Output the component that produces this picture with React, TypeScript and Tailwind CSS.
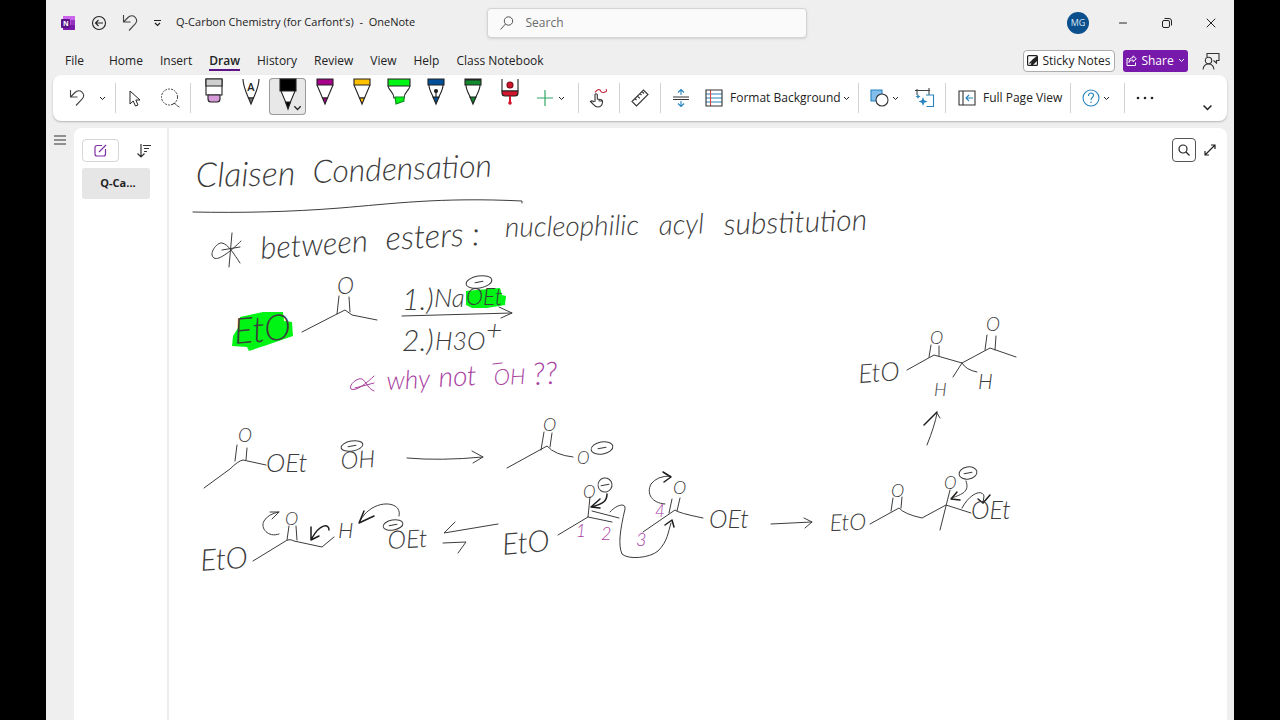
import type { ReactNode } from "react";
import { Minus, X } from "lucide-react";

const INK = "#3c3c3c";
const PLUM = "#a8409f";

interface Word {
  text: string;
  x: number;
  y: number;
  size: number;
  tilt?: number;
  color?: string;
}

const words: Word[] = [
  { text: "Claisen", x: 196, y: 187, size: 34, tilt: -1 },
  { text: "Condensation", x: 313, y: 183, size: 32, tilt: -2 },
  { text: "between", x: 261, y: 259, size: 31, tilt: -4 },
  { text: "esters :", x: 386, y: 250, size: 33, tilt: -3 },
  { text: "nucleophilic", x: 505, y: 237, size: 28, tilt: -1 },
  { text: "acyl", x: 659, y: 235, size: 28, tilt: -2 },
  { text: "substitution", x: 724, y: 235, size: 30, tilt: -2 },
  { text: "EtO", x: 235, y: 344, size: 36, tilt: -5 },
  { text: "O", x: 337, y: 294, size: 23 },
  { text: "1.)", x: 402, y: 310, size: 30 },
  { text: "Na", x: 434, y: 307, size: 26 },
  { text: "OEt", x: 466, y: 305, size: 23 },
  { text: "2.)", x: 402, y: 351, size: 30 },
  { text: "H3O", x: 435, y: 350, size: 25 },
  { text: "+", x: 486, y: 340, size: 28 },
  { text: "why", x: 387, y: 390, size: 26, tilt: -3, color: PLUM },
  { text: "not", x: 439, y: 387, size: 28, tilt: -3, color: PLUM },
  { text: "OH", x: 494, y: 385, size: 22, tilt: -2, color: PLUM },
  { text: "??", x: 533, y: 385, size: 31, tilt: -3, color: PLUM },
  { text: "O", x: 238, y: 442, size: 19 },
  { text: "OEt", x: 266, y: 472, size: 26 },
  { text: "OH", x: 341, y: 469, size: 24, tilt: -3 },
  { text: "O", x: 543, y: 431, size: 18 },
  { text: "O", x: 577, y: 464, size: 17 },
  { text: "EtO", x: 201, y: 571, size: 30, tilt: -4 },
  { text: "O", x: 285, y: 525, size: 18 },
  { text: "H", x: 338, y: 538, size: 22 },
  { text: "OEt", x: 388, y: 549, size: 25, tilt: -3 },
  { text: "EtO", x: 503, y: 555, size: 30, tilt: -5 },
  { text: "O", x: 583, y: 498, size: 17 },
  { text: "1", x: 576, y: 537, size: 17, color: PLUM },
  { text: "2", x: 601, y: 540, size: 18, color: PLUM },
  { text: "3", x: 636, y: 546, size: 18, color: PLUM },
  { text: "4", x: 655, y: 517, size: 17, color: PLUM },
  { text: "O", x: 673, y: 494, size: 18 },
  { text: "OEt", x: 709, y: 528, size: 25 },
  { text: "EtO", x: 830, y: 531, size: 23, tilt: -2 },
  { text: "O", x: 891, y: 497, size: 18 },
  { text: "O", x: 944, y: 489, size: 17 },
  { text: "OEt", x: 971, y: 519, size: 25 },
  { text: "EtO", x: 859, y: 383, size: 26, tilt: -4 },
  { text: "O", x: 930, y: 344, size: 18 },
  { text: "O", x: 986, y: 331, size: 19 },
  { text: "H", x: 934, y: 396, size: 18 },
  { text: "H", x: 978, y: 389, size: 21 },
];

const strokes = [
  // heading rule and bullet
  "M193 212C240 213 290 212 340 208S440 197 522 201v2",
  "M232 233L229 267M241 241C232 250 219 261 214 258C208 254 217 242 222 243C228 244 234 254 240 263M222 250L240 247",
  // ester with reagents
  "M302 332L335 315L345 310L352 315L377 320M339 296L337 314M349 297L350 312",
  "M402 316L512 313M499 307L512 313L501 318",
  // hydrolysis row
  "M204 488L230 469Q238 461 243 460L266 465M237 445L235 461M247 448L246 460",
  "M407 458Q440 461 483 457M472 451L483 457L473 463",
  "M507 468L547 446Q555 455 573 457M544 432L541 450M552 433L550 447",
  // deprotonation
  "M253 561L284 542Q289 538 294 541L322 547L334 537M289 526L287 540M296 526L297 540",
  "M279 534C268 538 260 528 264 521Q268 514 279 512M270 512L279 512L272 519",
  "M498 524L444 533L455 522M443 543L466 542L458 553",
  // enolate
  "M558 535L588 517L590 497M592 511L619 518M588 517L612 522",
  "M610 512C616 505 626 502 625 509C620 530 618 545 622 554C628 560 650 558 658 551C668 541 668 532 671 523",
  "M643 532L675 510Q678 513 703 518M672 499L669 513M680 498L677 511",
  "M665 504C652 503 646 494 651 484Q657 476 670 476",
  "M771 524L812 522M804 518L812 522L805 528",
  // tetrahedral intermediate
  "M870 524L899 508Q904 514 922 518L946 505L971 513M950 490L946 506L940 530M893 498L891 511M902 497L901 508",
  "M966 481C970 492 962 494 952 498M962 508C970 493 982 489 984 496L983 503",
  // beta-keto ester
  "M907 370L934 355L962 363L990 348L1016 357M931 345L929 357M939 346L939 356M987 335L985 350M996 336L995 350",
  "M962 363L953 377M962 363Q966 370 977 372",
  "M927 445Q935 425 937 413L940 418",
];

const boldStrokes = [
  "M329 530C329 523 320 524 312 538M311 527L311 540L319 536",
  "M364 511L359 523L374 516",
  "M607 494C607 503 600 504 592 507M600 499L591 507L600 508",
  "M665 525L672 520L674 527",
  "M663 472L671 477L664 482",
  "M957 492L951 499L960 500",
  "M978 499L983 503L990 495",
  "M924 425L937 412",
];

const charges = [
  { x: 479, y: 282, rx: 13, ry: 6 },
  { x: 352, y: 446, rx: 11, ry: 5 },
  { x: 602, y: 448, rx: 11, ry: 6 },
  { x: 393, y: 525, rx: 10, ry: 5 },
  { x: 605, y: 485, rx: 7, ry: 7 },
  { x: 968, y: 473, rx: 9, ry: 6 },
];

function InkLayer() {
  return (
    <svg
      className="block h-[592px] w-[1058px] shrink-0"
      viewBox="169 128 1058 592"
      fill="none"
      strokeLinecap="round"
      strokeLinejoin="round"
    >
      <g fill="#00f514">
        <path d="M240 317L263 312L283 312L284 321L292 322L293 336L267 345L249 351L247 347L232 346L233 336L238 328Z" />
        <path d="M466 291L500 288L502 295L506 296L505 305L487 308L472 308L466 305Z" />
      </g>
      <g stroke={INK} strokeWidth="1">
        {strokes.map((d) => (
          <path key={d} d={d} />
        ))}
        <path d="M399 516C403 500 372 498 360 521" />
        {charges.map((c) => (
          <g key={c.x} transform={`rotate(-10 ${c.x} ${c.y})`}>
            <ellipse cx={c.x} cy={c.y} rx={c.rx} ry={c.ry} />
            <path d={`M${c.x - 4} ${c.y}h8`} />
          </g>
        ))}
      </g>
      <g stroke="#1c1c1c" strokeWidth="1.5">
        {boldStrokes.map((d) => (
          <path key={d} d={d} />
        ))}
      </g>
      <path
        d="M374 376C368 382 356 392 351 389C348 385 358 377 362 379C366 381 368 389 374 391M355 388L374 383M493 364L502 363"
        stroke={PLUM}
      />
      <g className="font-['Lato',sans-serif] font-light italic">
        {words.map((w) => (
          <text
            key={`${w.text}-${w.x}`}
            x={w.x}
            y={w.y}
            fontSize={w.size}
            fill={w.color ?? INK}
            transform={`rotate(${w.tilt ?? 0} ${w.x} ${w.y})`}
          >
            {w.text}
          </text>
        ))}
      </g>
    </svg>
  );
}

function Caret({ className = "w-[7px]" }: { className?: string }) {
  return (
    <svg className={`shrink-0 ${className}`} viewBox="0 0 7 5" fill="none" stroke="currentColor" strokeWidth="1">
      <path d="M1 1l2.5 2.5L6 1" />
    </svg>
  );
}

function UndoIcon() {
  return (
    <svg width="16" height="18" viewBox="0 0 16 18" fill="none" stroke="#444" strokeWidth="1.1">
      <path d="M1.5 1v7h7M1.5 8L6 3.5c2-2 5-2.200 7-.4c2 2 2 4.800.2 6.900L7 16.500" />
    </svg>
  );
}

function Divider() {
  return <div className="mx-1 h-[30px] w-px shrink-0 bg-[#d2d2d2]" />;
}

interface ToolProps {
  label: string;
  className?: string;
  children: ReactNode;
}

function Tool({ label, className = "w-8", children }: ToolProps) {
  return (
    <button type="button" aria-label={label} className={`flex h-full shrink-0 items-center justify-center ${className}`}>
      {children}
    </button>
  );
}

function PenTool({ label, selected, children }: { label: string; selected?: boolean; children: ReactNode }) {
  return (
    <button
      type="button"
      aria-label={label}
      aria-pressed={!!selected}
      className={`relative mt-[3px] flex h-[37px] w-[37px] shrink-0 justify-center self-start rounded ${
        selected ? "bg-[#e8e8e8] ring-1 ring-[#9a9a9a] ring-inset" : ""
      }`}
    >
      <svg width="24" height="32" viewBox="0 0 24 32" fill="none" stroke="#222" strokeWidth="1.1" className="overflow-visible">
        {children}
      </svg>
      {selected && <Caret className="absolute right-1 bottom-1 w-[9px]" />}
    </button>
  );
}

function Pencil({ color }: { color: string }) {
  return (
    <>
      <path d="M4 7L9.500 20h5L20 7" fill="#fff" />
      <path d="M4 1h16v6H4z" fill={color} />
      <path d="M9.500 20h5L12 26z" fill={color} />
    </>
  );
}

const tabs = ["Home", "Insert", "Draw", "History", "Review", "View", "Help", "Class Notebook"];

function TitleBar() {
  return (
    <header className="flex h-[45px] items-center">
      <div className="flex min-w-0 flex-1 items-center pl-[14px]">
        <svg width="16" height="16" viewBox="0 0 16 16" className="shrink-0">
          <rect x="3" y="1" width="12" height="14" rx="1" fill="#ae4bd5" />
          <path d="M3 2a1 1 0 011-1h10a1 1 0 011 1v3H3z" fill="#ca64ea" />
          <path d="M11 5h4v5h-4z" fill="#9332bf" />
          <path d="M3 10h12v4a1 1 0 01-1 1H4a1 1 0 01-1-1z" fill="#7719aa" />
          <rect x="1" y="4" width="9" height="9" rx="1" fill="#5c1387" />
          <text x="3" y="11" fontSize="7" fontWeight="700" fill="#fff">N</text>
        </svg>
        <button type="button" aria-label="Back" className="ml-[15px]">
          <svg width="16" height="16" viewBox="0 0 16 16" fill="none" stroke="#222" strokeWidth="1.1">
            <circle cx="8" cy="8" r="6.500" />
            <path d="M12 8H4.500M7.500 5l-3 3l3 3" />
          </svg>
        </button>
        <button type="button" aria-label="Undo" className="ml-[15px]">
          <UndoIcon />
        </button>
        <button type="button" aria-label="Customize Quick Access Toolbar" className="ml-4">
          <svg width="7" height="8" viewBox="0 0 7 8" fill="none" stroke="#222" strokeWidth="1.200">
            <path d="M0 1.500h7M1 4l2.500 2.500L6 4" />
          </svg>
        </button>
        <h1 className="ml-[15px] truncate text-[11px] whitespace-pre">Q-Carbon Chemistry (for Carfont's)  -  OneNote</h1>
      </div>
      <label className="ml-[14px] flex h-[30px] w-80 items-center gap-3 rounded border border-[#d4d4d4] bg-[#fafafa] px-3 shadow-sm">
        <svg width="14" height="14" viewBox="0 0 14 14" fill="none" stroke="#555" strokeWidth="1">
          <circle cx="8.500" cy="5" r="4.200" />
          <path d="M5.500 8L.5 13.500" />
        </svg>
        <input
          type="text"
          aria-label="Search"
          placeholder="Search"
          className="min-w-0 flex-1 bg-transparent text-xs outline-none placeholder:text-[#6b6b6b]"
        />
      </label>
      <div className="flex flex-1 items-center justify-end pr-[15px]">
        <button type="button" className="size-[22px] rounded-full bg-[#0b4f8c] text-[9px] text-[#d7e6f4]">MG</button>
        <button type="button" aria-label="Minimize" className="ml-7">
          <Minus size={12} strokeWidth={2} />
        </button>
        <button type="button" aria-label="Restore" className="ml-8">
          <svg width="12" height="12" viewBox="0 0 12 12" fill="none" stroke="#222" strokeWidth="1">
            <rect x="1.500" y="3.500" width="7" height="7" rx="1.500" />
            <path d="M3.500 1.500H8A2.500 2.500 0 0110.500 4v4.500" />
          </svg>
        </button>
        <button type="button" aria-label="Close" className="ml-[30px]">
          <X size={16} strokeWidth={1.5} />
        </button>
      </div>
    </header>
  );
}

function TabRow() {
  return (
    <nav className="flex h-[30px] items-center pt-px pr-[14px] pl-[19px] text-xs">
      <a href="#file" className="mr-[25px]">File</a>
      <div className="flex gap-[17px]">
        {tabs.map((tab) => (
          <a
            key={tab}
            href={`#${tab}`}
            className={tab === "Draw" ? "relative font-semibold after:absolute after:inset-x-0 after:-bottom-[2px] after:h-[2px] after:bg-[#5c1387]" : ""}
          >
            {tab}
          </a>
        ))}
      </div>
      <button type="button" className="ml-auto flex h-[22px] w-[92px] shrink-0 items-center justify-center gap-1 rounded border border-[#adadad] bg-white whitespace-nowrap">
        <svg width="11" height="11" viewBox="0 0 11 11" fill="none" stroke="#222" strokeWidth="1.200" className="shrink-0">
          <rect x=".6" y=".6" width="9.800" height="9.800" rx="1" />
          <path d="M10 1v5L6 10H4c0-4 2-6 6-9z" fill="#222" stroke="none" />
          <path d="M2.500 8.500L7 4" />
        </svg>
        Sticky Notes
      </button>
      <button type="button" className="ml-2 flex h-[22px] w-[65px] items-center justify-center gap-1 rounded-[3px] bg-[#7719aa] text-white">
        <svg width="11" height="11" viewBox="0 0 11 11" fill="none" stroke="currentColor" strokeWidth="1">
          <path d="M3 3.500H1v7h8.500V7.500M7 .8l3.300 3L7 6.800V5C5 5 4 5.500 3 7.500C3 4.500 4.500 2.800 7 2.600z" />
        </svg>
        Share
        <Caret />
      </button>
      <button type="button" aria-label="Feedback" className="ml-[14px]">
        <svg width="18" height="18" viewBox="0 0 18 18" fill="none" stroke="#333" strokeWidth="1.100">
          <path d="M5 5V1.500h12v7h-2.500V11L11.500 8.500" />
          <circle cx="6.500" cy="8.500" r="3.200" />
          <path d="M1 17.500c.5-3.500 2.500-5.500 5.500-5.500s5 2 5.500 5.500" />
        </svg>
      </button>
    </nav>
  );
}

function Ribbon() {
  return (
    <div className="mx-[7px] flex h-[46px] items-center rounded-lg bg-white pl-2 text-xs shadow-[0_1px_2px_rgba(0,0,0,0.25)]">
      <Tool label="Undo">
        <UndoIcon />
      </Tool>
      <Tool label="Undo options" className="w-[18px]">
        <Caret />
      </Tool>
      <Divider />
      <Tool label="Select objects" className="w-[30px]">
        <svg width="12" height="17" viewBox="0 0 12 17" fill="none" stroke="#222" strokeWidth="1">
          <path d="M1 1v13l3.200-3l2.300 5L9 15L6.800 10H11z" />
        </svg>
      </Tool>
      <Tool label="Lasso select" className="ml-1 w-8">
        <svg width="20" height="20" viewBox="0 0 20 20" fill="none" stroke="#444" strokeWidth="1">
          <circle cx="9.500" cy="9" r="8" strokeDasharray="2 1" />
          <path d="M12 17c1-2 3-2 4-.5s2.500 2 3.500 2.500" />
        </svg>
      </Tool>
      <Divider />
      <PenTool label="Eraser">
        <path d="M4 1h16v16H4z" fill="#fff" />
        <path d="M4 1h16v7H4z" fill="#cfcfcf" />
        <path d="M6 17h12v4q0 3-3 3H9q-3 0-3-3z" fill="#d79ad8" />
      </PenTool>
      <PenTool label="Ink to text pen">
        <path d="M4 1C4 8 7 14 9.500 20h5C17 14 20 8 20 1" fill="#fff" />
        <path d="M9.500 20h5L12 26z" fill="#777" />
        <text x="12" y="13" textAnchor="middle" fontSize="11" fontWeight="600" fill="#222" stroke="none">A</text>
      </PenTool>
      <PenTool label="Black pen" selected>
        <path d="M5 13L10 25h4l5-12" fill="#fff" />
        <path d="M4 1h16v12H4z" fill="#000" />
        <path d="M9.500 24h5L12 31z" fill="#000" />
      </PenTool>
      <PenTool label="Purple pen"><Pencil color="#a6008a" /></PenTool>
      <PenTool label="Yellow pen"><Pencil color="#ffc000" /></PenTool>
      <PenTool label="Green highlighter">
        <path d="M1 8c1 5 6 6 6 12h10c0-6 5-7 6-12" fill="#fff" />
        <path d="M1 1h22v7H1z" fill="#00f514" />
        <path d="M8 19h9v4l-8 3z" fill="#00f514" stroke="#118a1b" />
      </PenTool>
      <PenTool label="Blue fountain pen">
        <path d="M5 7C5 12 8 16 9.500 20h5C16 16 19 12 19 7" fill="#fff" />
        <path d="M4 1h16v6H4z" fill="#004f98" />
        <path d="M9 19h6l-3 7z" fill="#004f98" />
        <path d="M12 14v6" />
        <circle cx="12" cy="13" r="1.500" fill="#222" />
      </PenTool>
      <PenTool label="Green pen">
        <path d="M5 7C5 12 8 16 9.500 20h5C16 16 19 12 19 7" fill="#fff" />
        <path d="M4 1h16v6H4zM4 2h16" fill="#12892f" />
        <path d="M9 19h6l-3 7z" fill="#12892f" />
      </PenTool>
      <PenTool label="Laser pointer">
        <path d="M4 1v12h16V1" fill="#fff" />
        <path d="M4 13h16v2q0 3-3 3H7q-3 0-3-3z" fill="#d0152c" />
        <circle cx="12" cy="7" r="3" fill="#d0152c" stroke="#7a0c1a" />
        <path d="M12 18v7" stroke="#d0152c" strokeWidth="2" />
        <circle cx="12" cy="25" r="1.800" fill="#d0152c" stroke="none" />
      </PenTool>
      <Tool label="Add pen" className="w-[46px] gap-[5px]">
        <svg width="16" height="16" viewBox="0 0 16 16" stroke="#2fa866" strokeWidth="1.200">
          <path d="M8 0v16M0 8h16" />
        </svg>
        <Caret />
      </Tool>
      <Divider />
      <Tool label="Draw with touch">
        <svg width="20" height="20" viewBox="0 0 20 20" fill="none" strokeWidth="1.100">
          <path d="M6 14V6.500q1.200-1.500 2.300 0V11l4.200.8q1.500.5 1 2.700c-.5 3-1.500 4.500-4.500 4.500c-3.500 0-4-2-7.500-5.500q1.500-1.500 3.500.5M10.200 11.500v2M12 12v2" stroke="#333" />
          <path d="M6 4.500c2-3 4-3.500 5-2.500s1 3 3.500 2.500s4-1.500 2.500-3.500" stroke="#c8283a" />
        </svg>
      </Tool>
      <Divider />
      <Tool label="Ruler">
        <svg width="18" height="18" viewBox="0 0 18 18" fill="none" stroke="#333" strokeWidth="1.100">
          <path d="M1 12.500L12.500 1L17 5.500L5.500 17zM4 9.500l1.500 1.500M6.500 7l2.300 2.300M9 4.500L10.500 6M11 2.500l2 2" />
        </svg>
      </Tool>
      <Divider />
      <Tool label="Insert space">
        <svg width="16" height="18" viewBox="0 0 16 18" fill="none" strokeWidth="1.100">
          <path d="M0 8h16M0 10.500h16" stroke="#333" />
          <path d="M8 6V.8M5 3.500l3-3l3 3M8 12v5.200M5 14.500l3 3l3-3" stroke="#2683bf" />
        </svg>
      </Tool>
      <button type="button" className="flex h-full w-[157px] shrink-0 items-center pl-2 whitespace-nowrap">
        <svg width="18" height="18" viewBox="0 0 18 18" fill="none" strokeWidth="1.100">
          <path d="M1 5h16M1 9h16M1 13h16" stroke="#2683bf" />
          <path d="M5.500 1v16" stroke="#d6473f" />
          <path d="M1 1h16v16H1z" stroke="#333" />
        </svg>
        <span className="mr-[2px] ml-[7px]">Format Background</span>
        <Caret />
      </button>
      <Divider />
      <Tool label="Shapes" className="w-[42px] gap-[3px]">
        <svg width="19" height="18" viewBox="0 0 19 18" strokeWidth="1.100">
          <path d="M1 1h11v11H1z" fill="#83bdec" stroke="#2683bf" />
          <circle cx="12" cy="11" r="6" fill="#fff" stroke="#333" />
        </svg>
        <Caret />
      </Tool>
      <Tool label="Ink to shape" className="ml-1 w-8">
        <svg width="20" height="20" viewBox="0 0 20 20" fill="none" strokeWidth="1.100">
          <path d="M2 1v6M0 2.500h15M14 0v7" stroke="#444" />
          <path d="M11 7h7.500v11.500h-7" stroke="#2683bf" />
          <path d="M8 9l1.200 3.300L12.500 13.500l-3.300 1.200L8 18l-1.200-3.300L3.500 13.500l3.300-1.200z" fill="#2683bf" stroke="none" />
          <path d="M3 6l.8 1.700l1.700.8l-1.700.8L3 11l-.8-1.700L.5 8.500l1.700-.8z" fill="#2683bf" stroke="none" />
        </svg>
      </Tool>
      <Divider />
      <button type="button" className="flex h-full w-[116px] shrink-0 items-center gap-[7px] pl-2 whitespace-nowrap">
        <svg width="18" height="16" viewBox="0 0 18 16" fill="none" strokeWidth="1.100">
          <path d="M1 1h16v14H1zM5 1v14" stroke="#333" />
          <path d="M15 8H8M11 5L8 8l3 3" stroke="#2683bf" />
        </svg>
        Full Page View
      </button>
      <Divider />
      <Tool label="Help" className="w-[45px] gap-[3px] pr-1">
        <svg width="18" height="18" viewBox="0 0 18 18" fill="none" stroke="#2683bf" strokeWidth="1.100">
          <circle cx="9" cy="9" r="8" />
          <path d="M6.500 7q0-3 2.500-3t2.500 2.300C11.500 8.500 9 8.500 9 11M9 12.500V14" />
        </svg>
        <Caret />
      </Tool>
      <Divider />
      <Tool label="More commands">
        <svg width="18" height="4" viewBox="0 0 18 4" fill="#222">
          <circle cx="2" cy="2" r="1.300" />
          <circle cx="9" cy="2" r="1.300" />
          <circle cx="16" cy="2" r="1.300" />
        </svg>
      </Tool>
      <Tool label="Collapse ribbon" className="mr-1 ml-auto w-8 pt-5">
        <Caret className="w-[11px]" />
      </Tool>
    </div>
  );
}

function PageList() {
  return (
    <aside className="w-[95px] shrink-0 border-r-2 border-[#ededed] pt-[11px] pl-2">
      <div className="flex items-center gap-[18px]">
        <button type="button" aria-label="Add page" className="flex h-[23px] w-[37px] items-center justify-center rounded border border-[#d6d6d6]">
          <svg width="13" height="13" viewBox="0 0 13 13" fill="none" stroke="#8230a5" strokeWidth="1.200">
            <path d="M8 1.500H3a2 2 0 00-2 2V10a2 2 0 002 2h6.500a2 2 0 002-2V5M5 8l7-7" />
          </svg>
        </button>
        <button type="button" aria-label="Sort pages">
          <svg width="14" height="14" viewBox="0 0 14 14" fill="none" stroke="#333" strokeWidth="1.200">
            <path d="M4 0v13M.5 9.500L4 13l3.500-3.500M6 1.500h8M7 4.500h5M7 7.500h3" />
          </svg>
        </button>
      </div>
      <button type="button" className="mt-[6px] h-[31px] w-[68px] rounded-[3px] bg-[#e6e6e6] pl-1 text-[11px] font-bold">
        Q-Ca...
      </button>
    </aside>
  );
}

export default function App() {
  return (
    <div className="min-h-screen bg-black px-[46px] font-['Open_Sans',sans-serif] text-[#222]">
      <div className="flex min-h-screen flex-col bg-[#efefef]">
        <TitleBar />
        <TabRow />
        <Ribbon />
        <div className="mt-[7px] flex flex-1 pr-[7px]">
          <div className="w-7 shrink-0 pt-[7px] pl-2">
            <button type="button" aria-label="Show notebooks" className="block">
              <svg width="12" height="10" viewBox="0 0 12 10" stroke="#333" strokeWidth="1.100">
                <path d="M0 1h12M0 5h12M0 9h12" />
              </svg>
            </button>
          </div>
          <main className="flex min-w-0 flex-1 rounded-t-lg bg-white">
            <PageList />
            <section className="relative min-w-0 flex-1 overflow-hidden">
              <InkLayer />
              <div className="absolute top-[10px] right-[11px] flex items-center gap-2">
                <button type="button" aria-label="Search pages" className="flex size-6 items-center justify-center rounded border border-[#555] bg-white">
                  <svg width="12" height="12" viewBox="0 0 12 12" fill="none" stroke="#222" strokeWidth="1.200">
                    <circle cx="5" cy="5" r="4" />
                    <path d="M8 8l3.500 3.500" />
                  </svg>
                </button>
                <button type="button" aria-label="Expand page">
                  <svg width="12" height="12" viewBox="0 0 12 12" fill="none" stroke="#222" strokeWidth="1.200">
                    <path d="M1 11L11 1M7 1h4v4M1 7v4h4" />
                  </svg>
                </button>
              </div>
            </section>
          </main>
        </div>
      </div>
    </div>
  );
}
